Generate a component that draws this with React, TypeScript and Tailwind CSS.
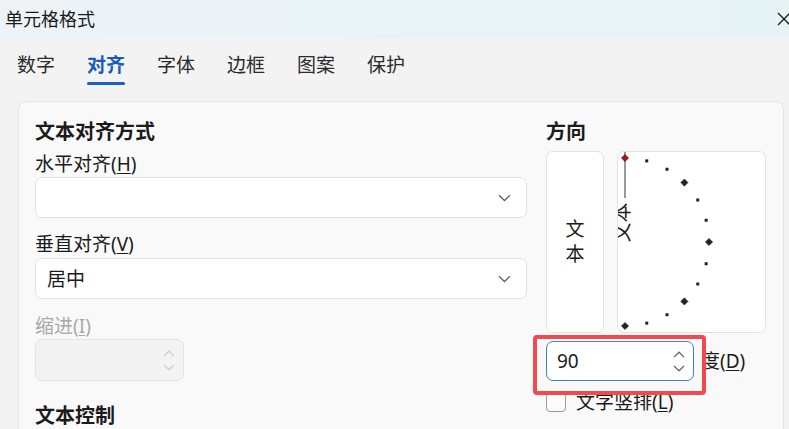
import React from "react";

const Chevron = ({ color = "#5f5f5f" }: { color?: string }) => (
  <svg width="13" height="8" viewBox="0 0 13 8" fill="none">
    <path d="M1 1.2 L6.5 6.5 L12 1.2" stroke={color} strokeWidth="1.3" />
  </svg>
);

const SpinArrows = ({ color }: { color: string }) => (
  <div className="flex flex-col gap-[7px]">
    <svg width="12" height="7" viewBox="0 0 12 7" fill="none">
      <path d="M1 6 L6 1.2 L11 6" stroke={color} strokeWidth="1.2" />
    </svg>
    <svg width="12" height="7" viewBox="0 0 12 7" fill="none">
      <path d="M1 1 L6 5.8 L11 1" stroke={color} strokeWidth="1.2" />
    </svg>
  </div>
);

function Dial() {
  const cx = 8;
  const cy = 91;
  const r = 84;
  const items: React.ReactNode[] = [];
  for (let a = -90; a <= 90; a += 15) {
    const rad = (a * Math.PI) / 180;
    const x = cx + r * Math.cos(rad);
    const y = cy - r * Math.sin(rad);
    if (a % 45 === 0) {
      const s = 3.6;
      const pts = `${x},${y - s} ${x + s},${y} ${x},${y + s} ${x - s},${y}`;
      items.push(
        <polygon
          key={a}
          points={pts}
          fill={a === 90 ? "#a3131b" : "#222"}
          stroke={a === 90 ? "#6b0b10" : "#222"}
          strokeWidth="0.6"
        />
      );
    } else {
      items.push(<rect key={a} x={x - 1.5} y={y - 1.5} width="3" height="3" fill="#222" />);
    }
  }
  return (
    <svg className="absolute left-[-1px] top-[-1px]" width="149" height="182" viewBox="0 0 149 182">
      <line x1={cx} y1="0" x2={cx} y2="47" stroke="#9a9a9a" strokeWidth="2" />
      <text
        x="0"
        y="0"
        transform="translate(3.5 71.5) rotate(-90)"
        textAnchor="middle"
        dominantBaseline="central"
        fontSize="20"
        fill="#1b1b1b"
        fontFamily="'Noto Sans CJK SC', sans-serif"
      >
        文本
      </text>
      {items}
    </svg>
  );
}

export default function App() {
  const tabs = ["数字", "对齐", "字体", "边框", "图案", "保护"];
  return (
    <div className="relative w-[789px] h-[429px] overflow-hidden bg-[#f3f3f3] text-[#1b1b1b] font-['Noto_Sans','Noto_Sans_CJK_SC',sans-serif] flex flex-col">
      {/* Title bar */}
      <div className="h-[38px] shrink-0 flex items-center pl-[5px] bg-gradient-to-r from-[#edf3f6] to-[#e6f3f5]">
        <span className="text-[18px] leading-[24px]">单元格格式</span>
        <svg className="ml-auto mr-[-2px]" width="14" height="14" viewBox="0 0 14 14" fill="none">
          <path d="M1 1 L13 13 M13 1 L1 13" stroke="#1b1b1b" strokeWidth="1.3" />
        </svg>
      </div>

      {/* Tabs */}
      <div className="flex pl-[17px] pt-[15px] gap-[32px] shrink-0">
        {tabs.map((t, i) => (
          <div key={t} className="flex flex-col items-center w-[38px]">
            <span
              className={
                "text-[19px] leading-[24px] whitespace-nowrap " +
                (i === 1 ? "text-[#1a5bb8] font-semibold" : "text-[#2b2b2b]")
              }
            >
              {t}
            </span>
            <div className={"mt-[5px] h-[3px] w-[38px] rounded-full " + (i === 1 ? "bg-[#1f5fbf]" : "bg-transparent")} />
          </div>
        ))}
      </div>

      {/* Panel */}
      <div className="mt-[16px] ml-[18px] mr-[5px] flex-1 rounded-t-[8px] border border-[#e6e6e6] border-b-0 bg-[#f9f9f9] pl-[16px] pr-[16px] pt-[18px] flex gap-[19px]">
        {/* Left column */}
        <div className="w-[492px] flex flex-col">
          <div className="text-[20px] leading-[24px] font-bold">文本对齐方式</div>
          <div className="mt-[8px] text-[19px] leading-[24px]">
            水平对齐(<span className="underline underline-offset-2">H</span>)
          </div>
          <div className="mt-[1px] h-[41px] rounded-[7px] border border-[#e2e2e2] bg-white flex items-center justify-end pr-[15px]">
            <Chevron />
          </div>
          <div className="mt-[14px] text-[19px] leading-[24px]">
            垂直对齐(<span className="underline underline-offset-2">V</span>)
          </div>
          <div className="mt-[2px] h-[41px] rounded-[7px] border border-[#e2e2e2] bg-white flex items-center pl-[11px] pr-[15px]">
            <span className="text-[19px] leading-[24px]">居中</span>
            <span className="ml-auto">
              <Chevron />
            </span>
          </div>
          <div className="mt-[15px] text-[19px] leading-[24px] text-[#a9a9a9]">
            缩进(<span className="underline underline-offset-2">I</span>)
          </div>
          <div className="mt-[1px] w-[149px] h-[42px] rounded-[7px] border border-[#e3e3e3] bg-[#f3f3f3] flex items-center justify-end pr-[8px]">
            <SpinArrows color="#cfcfcf" />
          </div>
          <div className="mt-[24px] text-[20px] leading-[22px] font-bold">文本控制</div>
        </div>

        {/* Right column */}
        <div className="flex flex-col w-[221px]">
          <div className="text-[20px] leading-[24px] font-bold">方向</div>
          <div className="mt-[7px] flex gap-[13px] h-[182px]">
            <div className="w-[58px] rounded-[7px] border border-[#e2e2e2] bg-white flex flex-col items-center justify-center">
              <span className="text-[19px] leading-[25px]">文</span>
              <span className="text-[19px] leading-[25px]">本</span>
            </div>
            <div className="relative w-[149px] rounded-[7px] border border-[#e2e2e2] bg-white overflow-hidden">
              <Dial />
            </div>
          </div>
          <div className="mt-[8px] flex items-center">
            <div className="w-[148px] h-[40px] rounded-[7px] border border-[#3d7fd6] bg-white flex items-center pl-[10px] pr-[8px]">
              <span className="text-[19px] leading-[24px] font-['Noto_Sans',sans-serif]">90</span>
              <span className="ml-auto">
                <SpinArrows color="#6a6a6a" />
              </span>
            </div>
            <span className="ml-[7px] text-[19px] leading-[24px]">
              度(<span className="underline underline-offset-2">D</span>)
            </span>
          </div>
          <div className="mt-[9px] flex items-center">
            <div className="w-[20px] h-[20px] rounded-[4px] border border-[#9a9a9a] bg-[#fbfbfb]" />
            <span className="ml-[10px] text-[19px] leading-[24px]">
              文字竖排(<span className="underline underline-offset-2">L</span>)
            </span>
          </div>
        </div>
      </div>

      {/* Red annotation highlight */}
      <div className="absolute left-[533px] top-[335px] w-[173px] h-[60px] border-[4px] border-[#ef4a50] rounded-[4px]" />
    </div>
  );
}
